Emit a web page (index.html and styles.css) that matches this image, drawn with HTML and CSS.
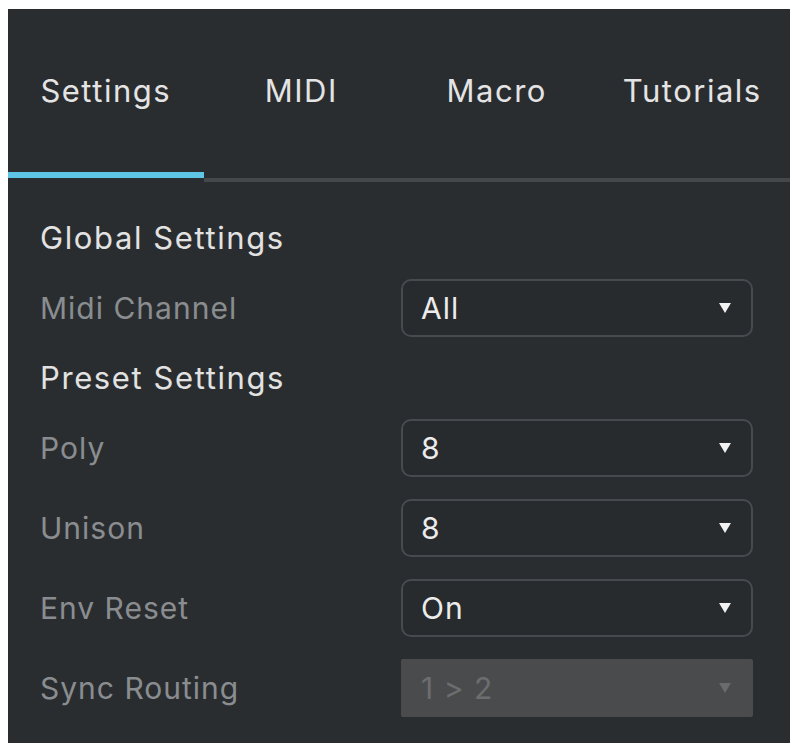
FILE: index.html
```html
<!DOCTYPE html>
<html lang="en">
<head>
<meta charset="utf-8">
<title>Settings</title>
<link rel="stylesheet" href="styles.css">
</head>
<body>
<div class="panel">
  <nav class="tabs">
    <div class="tab active">Settings</div>
    <div class="tab">MIDI</div>
    <div class="tab">Macro</div>
    <div class="tab">Tutorials</div>
  </nav>
  <div class="content">
    <div class="heading">Global Settings</div>
    <div class="label">Midi Channel</div>
    <div class="select"><span>All</span><svg class="arrow" viewBox="0 0 12 10" width="12" height="10"><polygon points="0,0 12,0 6,10"/></svg></div>
    <div class="heading">Preset Settings</div>
    <div class="label">Poly</div>
    <div class="select"><span>8</span><svg class="arrow" viewBox="0 0 12 10" width="12" height="10"><polygon points="0,0 12,0 6,10"/></svg></div>
    <div class="label">Unison</div>
    <div class="select"><span>8</span><svg class="arrow" viewBox="0 0 12 10" width="12" height="10"><polygon points="0,0 12,0 6,10"/></svg></div>
    <div class="label">Env Reset</div>
    <div class="select"><span>On</span><svg class="arrow" viewBox="0 0 12 10" width="12" height="10"><polygon points="0,0 12,0 6,10"/></svg></div>
    <div class="label">Sync Routing</div>
    <div class="select disabled"><span>1 &gt; 2</span><svg class="arrow" viewBox="0 0 12 10" width="12" height="10"><polygon points="0,0 12,0 6,10"/></svg></div>
  </div>
</div>
</body>
</html>
```
FILE: styles.css
```css
html, body {
  background: #ffffff;
}
body {
  margin: 8px;
  font-family: Inter, "Noto Sans", "Liberation Sans", sans-serif;
}
.panel {
  width: 782px;
  height: 734px;
  margin-top: 1px;
  background: #2a2d30;
  box-sizing: border-box;
}
.tabs {
  display: grid;
  grid-template-columns: repeat(4, 1fr);
}
.tab {
  height: 173px;
  box-sizing: border-box;
  border-bottom: 4px solid #44484b;
  display: flex;
  align-items: center;
  justify-content: center;
  padding-bottom: 6px;
  color: #e4e4e4;
  font-size: 31px;
  letter-spacing: 1.5px;
}
.tab.active {
  border-bottom-color: #2a2d30;
  box-shadow: inset 0 -6px 0 #5fc5e6;
}
.content {
  display: grid;
  grid-template-columns: 1fr 352px;
  row-gap: 22px;
  align-items: center;
  padding: 37px 37px 0 32px;
}
.heading {
  grid-column: 1 / -1;
  height: 38px;
  line-height: 38px;
  color: #e2e2e2;
  font-size: 31px;
  letter-spacing: 1.6px;
}
.label {
  color: #8a8d90;
  font-size: 30px;
  letter-spacing: 1px;
}
.select {
  height: 58px;
  box-sizing: border-box;
  border: 2px solid #474b4f;
  border-radius: 10px;
  background: #282b2e;
  display: flex;
  align-items: center;
  justify-content: space-between;
  padding: 0 20px 0 18px;
  color: #ececec;
  font-size: 30px;
  letter-spacing: 1px;
}
.arrow {
  fill: #f2f2f2;
}
.select.disabled {
  background: #4a4b4d;
  border-color: #4a4b4d;
  border-radius: 2px;
  color: #6c6d6f;
}
.select.disabled .arrow {
  fill: #6a6b6d;
}
```
